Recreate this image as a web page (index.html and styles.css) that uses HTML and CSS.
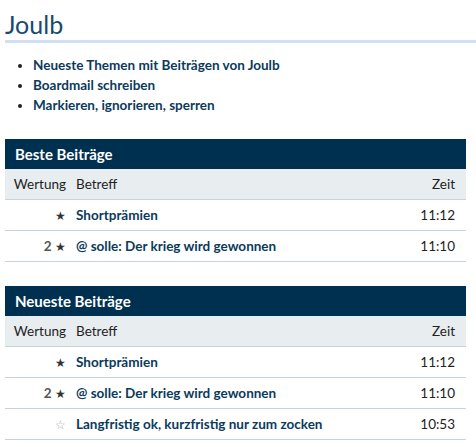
FILE: index.html
```html
<!DOCTYPE html>
<html lang="de">
<head>
    <meta charset="UTF-8">
    <meta name="viewport" content="width=device-width, initial-scale=1.0">
    <title>Joulb</title>
    <link rel="stylesheet" href="styles.css">
</head>
<body>
    <h1 class="page-title">Joulb</h1>

    <ul class="user-links">
        <li><a href="#">Neueste Themen mit Beiträgen von Joulb</a></li>
        <li><a href="#">Boardmail schreiben</a></li>
        <li><a href="#">Markieren, ignorieren, sperren</a></li>
    </ul>

    <!-- Beste Beiträge -->
    <table class="post-table">
        <caption>Beste Beiträge</caption>
        <thead>
            <tr>
                <th class="col-rating">Wertung</th>
                <th class="col-subject">Betreff</th>
                <th class="col-time">Zeit</th>
            </tr>
        </thead>
        <tbody>
            <tr>
                <td class="col-rating"><span class="star">★</span></td>
                <td class="col-subject"><a href="#">Shortprämien</a></td>
                <td class="col-time">11:12</td>
            </tr>
            <tr>
                <td class="col-rating"><span class="count">2</span> <span class="star">★</span></td>
                <td class="col-subject"><a href="#">@ solle: Der krieg wird gewonnen</a></td>
                <td class="col-time">11:10</td>
            </tr>
        </tbody>
    </table>

    <!-- Neueste Beiträge -->
    <table class="post-table">
        <caption>Neueste Beiträge</caption>
        <thead>
            <tr>
                <th class="col-rating">Wertung</th>
                <th class="col-subject">Betreff</th>
                <th class="col-time">Zeit</th>
            </tr>
        </thead>
        <tbody>
            <tr>
                <td class="col-rating"><span class="star">★</span></td>
                <td class="col-subject"><a href="#">Shortprämien</a></td>
                <td class="col-time">11:12</td>
            </tr>
            <tr>
                <td class="col-rating"><span class="count">2</span> <span class="star">★</span></td>
                <td class="col-subject"><a href="#">@ solle: Der krieg wird gewonnen</a></td>
                <td class="col-time">11:10</td>
            </tr>
            <tr>
                <td class="col-rating"><span class="star star-empty">☆</span></td>
                <td class="col-subject"><a href="#">Langfristig ok, kurzfristig nur zum zocken</a></td>
                <td class="col-time">10:53</td>
            </tr>
        </tbody>
    </table>
</body>
</html>
```

FILE: styles.css
```css
body {
    margin: 0;
    padding: 0 0 0 5px;
    font-family: Lato, "Open Sans", sans-serif;
    font-size: 14px;
    color: #222;
    background-color: #fff;
}

a {
    color: #0b3a5c;
    font-weight: bold;
    text-decoration: none;
}

/* Title */
.page-title {
    margin: 10px 0 0 0;
    padding-bottom: 2px;
    font-size: 25px;
    font-weight: normal;
    color: #164a6f;
    border-bottom: 3px solid #cfe0f5;
    line-height: 28px;
}

/* Link list */
.user-links {
    margin: 12px 0 24px 0;
    padding-left: 28px;
}

.user-links li {
    line-height: 20px;
    font-size: 13.5px;
}

/* Post tables */
.post-table {
    width: 461px;
    border-collapse: collapse;
    margin-bottom: 24px;
}

.post-table caption {
    background-color: #00304f;
    color: #fff;
    text-align: left;
    font-weight: bold;
    font-size: 15px;
    height: 30px;
    line-height: 30px;
    padding: 0 10px;
}

.post-table th {
    background-color: #e8edf0;
    font-weight: normal;
    font-size: 13.5px;
    height: 30px;
    text-align: left;
    padding: 0 5px;
    border-bottom: 1px solid #c8d4dd;
}

.post-table td {
    height: 30px;
    padding: 0 5px;
    border-bottom: 1px solid #c8d4dd;
    font-size: 13.5px;
}

.post-table .col-rating {
    width: 56px;
    text-align: right;
}

.post-table .col-time {
    text-align: right;
    padding-right: 11px;
}

.star {
    color: #333;
    font-size: 12px;
}

.star-empty {
    color: #aaa;
}

.count {
    font-weight: bold;
    color: #555;
}
```
